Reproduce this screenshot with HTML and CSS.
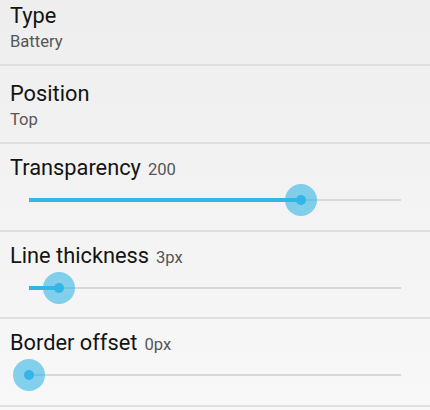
FILE: index.html
```html
<!DOCTYPE html>
<html>
<head>
<meta charset="utf-8">
<link rel="stylesheet" href="styles.css">
</head>
<body>
<div class="list">
  <div class="pref">
    <div class="title">Type</div>
    <div class="summary">Battery</div>
  </div>
  <div class="pref">
    <div class="title">Position</div>
    <div class="summary">Top</div>
  </div>
  <div class="pref slider-pref">
    <div class="title">Transparency<span class="value">200</span></div>
    <div class="slider">
      <div class="track">
        <div class="fill" style="width:73.1%"></div>
        <div class="thumb" style="left:73.1%"><div class="dot"></div></div>
      </div>
    </div>
  </div>
  <div class="pref slider-pref">
    <div class="title">Line thickness<span class="value">3px</span></div>
    <div class="slider">
      <div class="track">
        <div class="fill" style="width:8.1%"></div>
        <div class="thumb" style="left:8.1%"><div class="dot"></div></div>
      </div>
    </div>
  </div>
  <div class="pref slider-pref">
    <div class="title">Border offset<span class="value">0px</span></div>
    <div class="slider">
      <div class="track">
        <div class="fill" style="width:0%"></div>
        <div class="thumb" style="left:0%"><div class="dot"></div></div>
      </div>
    </div>
  </div>
</div>
</body>
</html>
```

FILE: styles.css
```css
html, body {
  margin: 0;
  padding: 0;
}
body {
  width: 430px;
  height: 410px;
  overflow: hidden;
  background: linear-gradient(to bottom, #eeeeee, #f8f8f8);
  font-family: Roboto, "Noto Sans", sans-serif;
}
.list {
  margin-top: -12px;
  display: flex;
  flex-direction: column;
}
.pref {
  padding: 15px 10px 10px 10px;
  border-bottom: 2px solid #dedede;
}
.title {
  font-size: 21.8px;
  line-height: 26px;
  height: 26px;
  color: #141414;
}
.summary {
  font-size: 16.6px;
  line-height: 25px;
  color: #565656;
}
.value {
  font-size: 16.6px;
  line-height: 16px;
  color: #565656;
  margin-left: 7px;
}
.slider-pref {
  padding-top: 11px;
  padding-bottom: 10.7px;
}
.slider {
  height: 38px;
  display: flex;
  align-items: center;
  padding: 0 19px;
}
.track {
  position: relative;
  flex: 1;
  height: 2px;
  background: #d8d8d8;
}
.fill {
  position: absolute;
  left: 0;
  top: -1px;
  height: 4px;
  background: #33b5e5;
}
.thumb {
  position: absolute;
  top: 1px;
  width: 32px;
  height: 32px;
  border-radius: 50%;
  background: rgba(51, 181, 229, 0.6);
  transform: translate(-50%, -50%);
  display: flex;
  align-items: center;
  justify-content: center;
}
.dot {
  width: 10px;
  height: 10px;
  border-radius: 50%;
  background: #33b5e5;
}
```
